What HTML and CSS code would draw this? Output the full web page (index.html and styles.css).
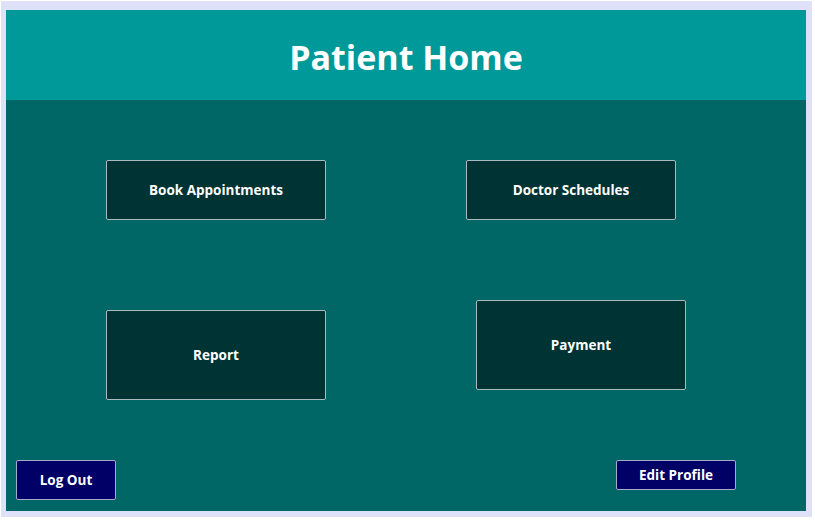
FILE: index.html
```html
<!DOCTYPE html>
<html>
<head>
<meta charset="utf-8">
<link rel="stylesheet" href="styles.css">
</head>
<body>
<div class="frame">
  <div class="window">
    <header class="header"><h1 class="title">Patient Home</h1></header>
    <main class="content">
      <div class="row row-1">
        <button class="tile tile-book">Book Appointments</button>
        <button class="tile tile-doctor">Doctor Schedules</button>
      </div>
      <div class="row row-2">
        <button class="tile tile-report">Report</button>
        <button class="tile tile-payment">Payment</button>
      </div>
      <div class="row row-3">
        <button class="nav nav-logout">Log Out</button>
        <button class="nav nav-edit">Edit Profile</button>
      </div>
    </main>
  </div>
</div>
</body>
</html>
```
FILE: styles.css
```css
html, body {
  margin: 0;
  padding: 0;
  background: #ffffff;
}
body {
  font-family: "Open Sans", "Noto Sans", sans-serif;
}
.frame {
  width: 800px;
  margin: 1px 0 0 1px;
  border-style: solid;
  border-color: #dfe1f8;
  border-width: 9px 6px 6px 5px;
}
.window {
  display: flex;
  flex-direction: column;
  height: 501px;
  background: #006666;
}
.header {
  height: 90px;
  background: #009999;
  display: flex;
  align-items: center;
  justify-content: center;
}
.title {
  margin: 0;
  color: #ffffff;
  font-size: 34px;
  font-weight: 700;
  letter-spacing: 0;
  padding-top: 3px;
}
.content {
  flex: 1;
  display: flex;
  flex-direction: column;
}
.row {
  display: flex;
  align-items: flex-start;
}
.row-1 {
  margin-top: 60px;
  padding-left: 100px;
  gap: 140px;
}
.row-2 {
  margin-top: 80px;
  padding-left: 100px;
  gap: 150px;
}
.row-3 {
  margin-top: 60px;
  padding-left: 10px;
  gap: 500px;
}
button {
  font-family: "Open Sans", "Noto Sans", sans-serif;
  font-weight: 700;
  color: #ffffff;
  margin: 0;
  padding: 0;
  cursor: pointer;
}
.tile {
  background: #003333;
  border: 1px solid #a9bcbc;
  border-radius: 2px;
  font-size: 13.5px;
}
.tile-book { width: 220px; height: 60px; }
.tile-doctor { width: 210px; height: 60px; }
.tile-report { width: 220px; height: 90px; margin-top: 10px; }
.tile-payment { width: 210px; height: 90px; }
.nav {
  background: #000066;
  border: 1px solid #a7a9c9;
  border-radius: 2px;
  font-size: 13.5px;
}
.nav-logout { width: 100px; height: 40px; }
.nav-edit { width: 120px; height: 30px; }
```
